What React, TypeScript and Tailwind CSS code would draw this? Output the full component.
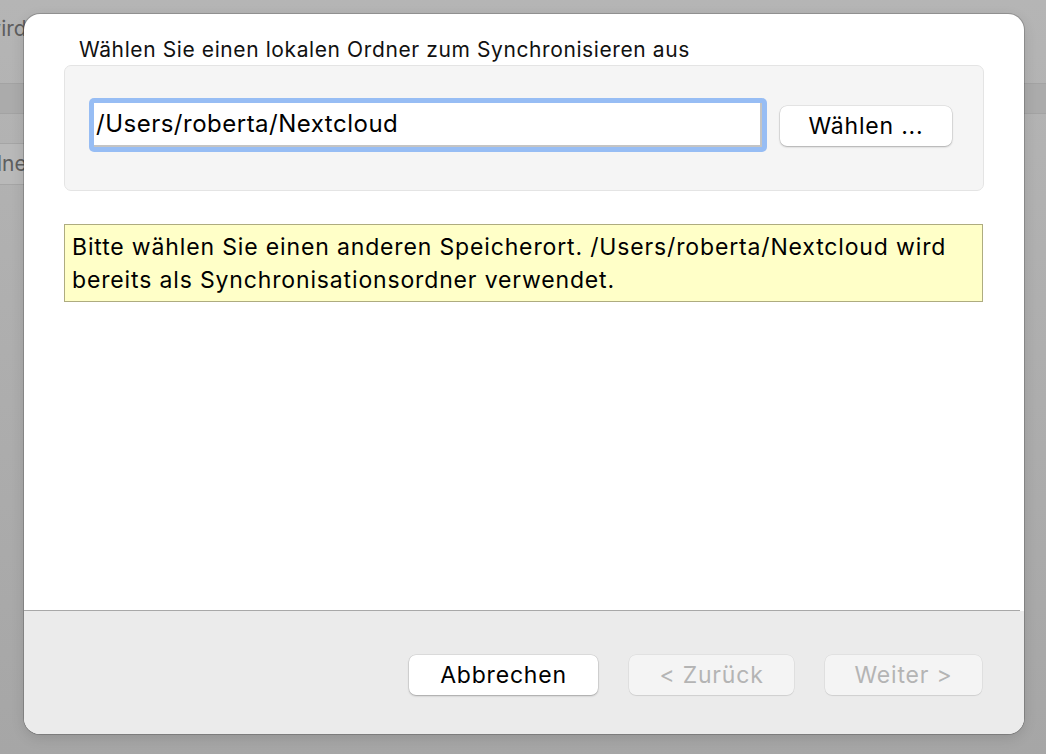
import React from "react";

const font = { fontFamily: "Inter, 'Noto Sans', 'Liberation Sans', sans-serif" };

export default function App() {
  return (
    <div className="relative w-[1046px] h-[754px] overflow-hidden bg-gradient-to-b from-[#b5b5b5] to-[#a6a6a6]" style={font}>
      {/* underlying window (dimmed) */}
      <div className="flex flex-col w-full">
        <div className="h-[60px] flex items-center">
          <span className="text-[21px] text-[#5e5e5e] -ml-[16px] mt-[-2px]">wird</span>
        </div>
        <div className="h-[23px]" />
        <div className="h-[31px] bg-[#ababab] border-y border-[#a3a3a3]" />
        <div className="h-[29px]" />
        <div className="h-[42px] flex items-center border-y border-r border-[#a5a5a5] w-[60px] rounded-r-[4px] bg-[#b9b9b9]">
          <span className="text-[21px] text-[#5e5e5e] -ml-[3px]">lner</span>
        </div>
      </div>

      {/* dialog */}
      <div className="absolute left-[24px] top-[14px] w-[1000px] h-[720px] rounded-[16px] overflow-hidden flex flex-col bg-white shadow-[0_0_0_1px_rgba(0,0,0,0.18),0_4px_14px_rgba(0,0,0,0.12)]">
        <div className="flex-1 flex flex-col px-[40px]">
          <div className="pt-[23px] pl-[15px] text-[21px] tracking-[0.6px] leading-[26px] text-[#111]">
            Wählen Sie einen lokalen Ordner zum Synchronisieren aus
          </div>
          <div className="mt-[2px] h-[126px] w-[920px] rounded-[7px] bg-[#f5f5f5] border border-[#e4e4e4] flex items-start pl-[24px] pt-[32px] gap-[13px]">
            <div className="w-[678px] h-[54px] rounded-[5px] bg-[#97bdf4] p-[5px]">
              <div className="h-full w-full bg-white border-b-[2px] border-r-[2px] border-[#c4c4c4] flex items-center pl-[2px] text-[24px] tracking-[0.5px] text-black">
                /Users/roberta/Nextcloud
              </div>
            </div>
            <button className="mt-[8px] w-[172px] h-[40px] rounded-[7px] bg-white text-[23px] tracking-[0.8px] text-black shadow-[0_0_0_0.5px_rgba(0,0,0,0.12),0_1px_2px_rgba(0,0,0,0.25)]">
              Wählen ...
            </button>
          </div>
          <div className="mt-[33px] w-[919px] h-[78px] bg-[#ffffc8] border border-[#aeac80] px-[7px] pt-[6px] text-[23px] tracking-[0.85px] leading-[33px] text-black">
            Bitte wählen Sie einen anderen Speicherort. /Users/roberta/Nextcloud wird bereits als Synchronisationsordner verwendet.
          </div>
        </div>
        <div className="h-[1px] bg-[#a8a8a8] mr-[4px]" />
        <div className="h-[123px] bg-[#ebebeb] flex justify-end items-start pt-[44px] pr-[42px] gap-[31px]">
          <button className="w-[189px] h-[40px] rounded-[7px] bg-white text-[23px] tracking-[0.8px] text-black shadow-[0_0_0_0.5px_rgba(0,0,0,0.12),0_1px_2px_rgba(0,0,0,0.25)]">
            Abbrechen
          </button>
          <button className="w-[165px] h-[40px] rounded-[7px] bg-[#f4f4f4] text-[23px] tracking-[0.8px] text-[#b4b4b4] shadow-[0_0_0_0.5px_rgba(0,0,0,0.08),0_1px_1px_rgba(0,0,0,0.08)]">
            &lt; Zurück
          </button>
          <button className="w-[157px] h-[40px] rounded-[7px] bg-[#f4f4f4] text-[23px] tracking-[0.8px] text-[#b4b4b4] shadow-[0_0_0_0.5px_rgba(0,0,0,0.08),0_1px_1px_rgba(0,0,0,0.08)]">
            Weiter &gt;
          </button>
        </div>
      </div>
    </div>
  );
}
